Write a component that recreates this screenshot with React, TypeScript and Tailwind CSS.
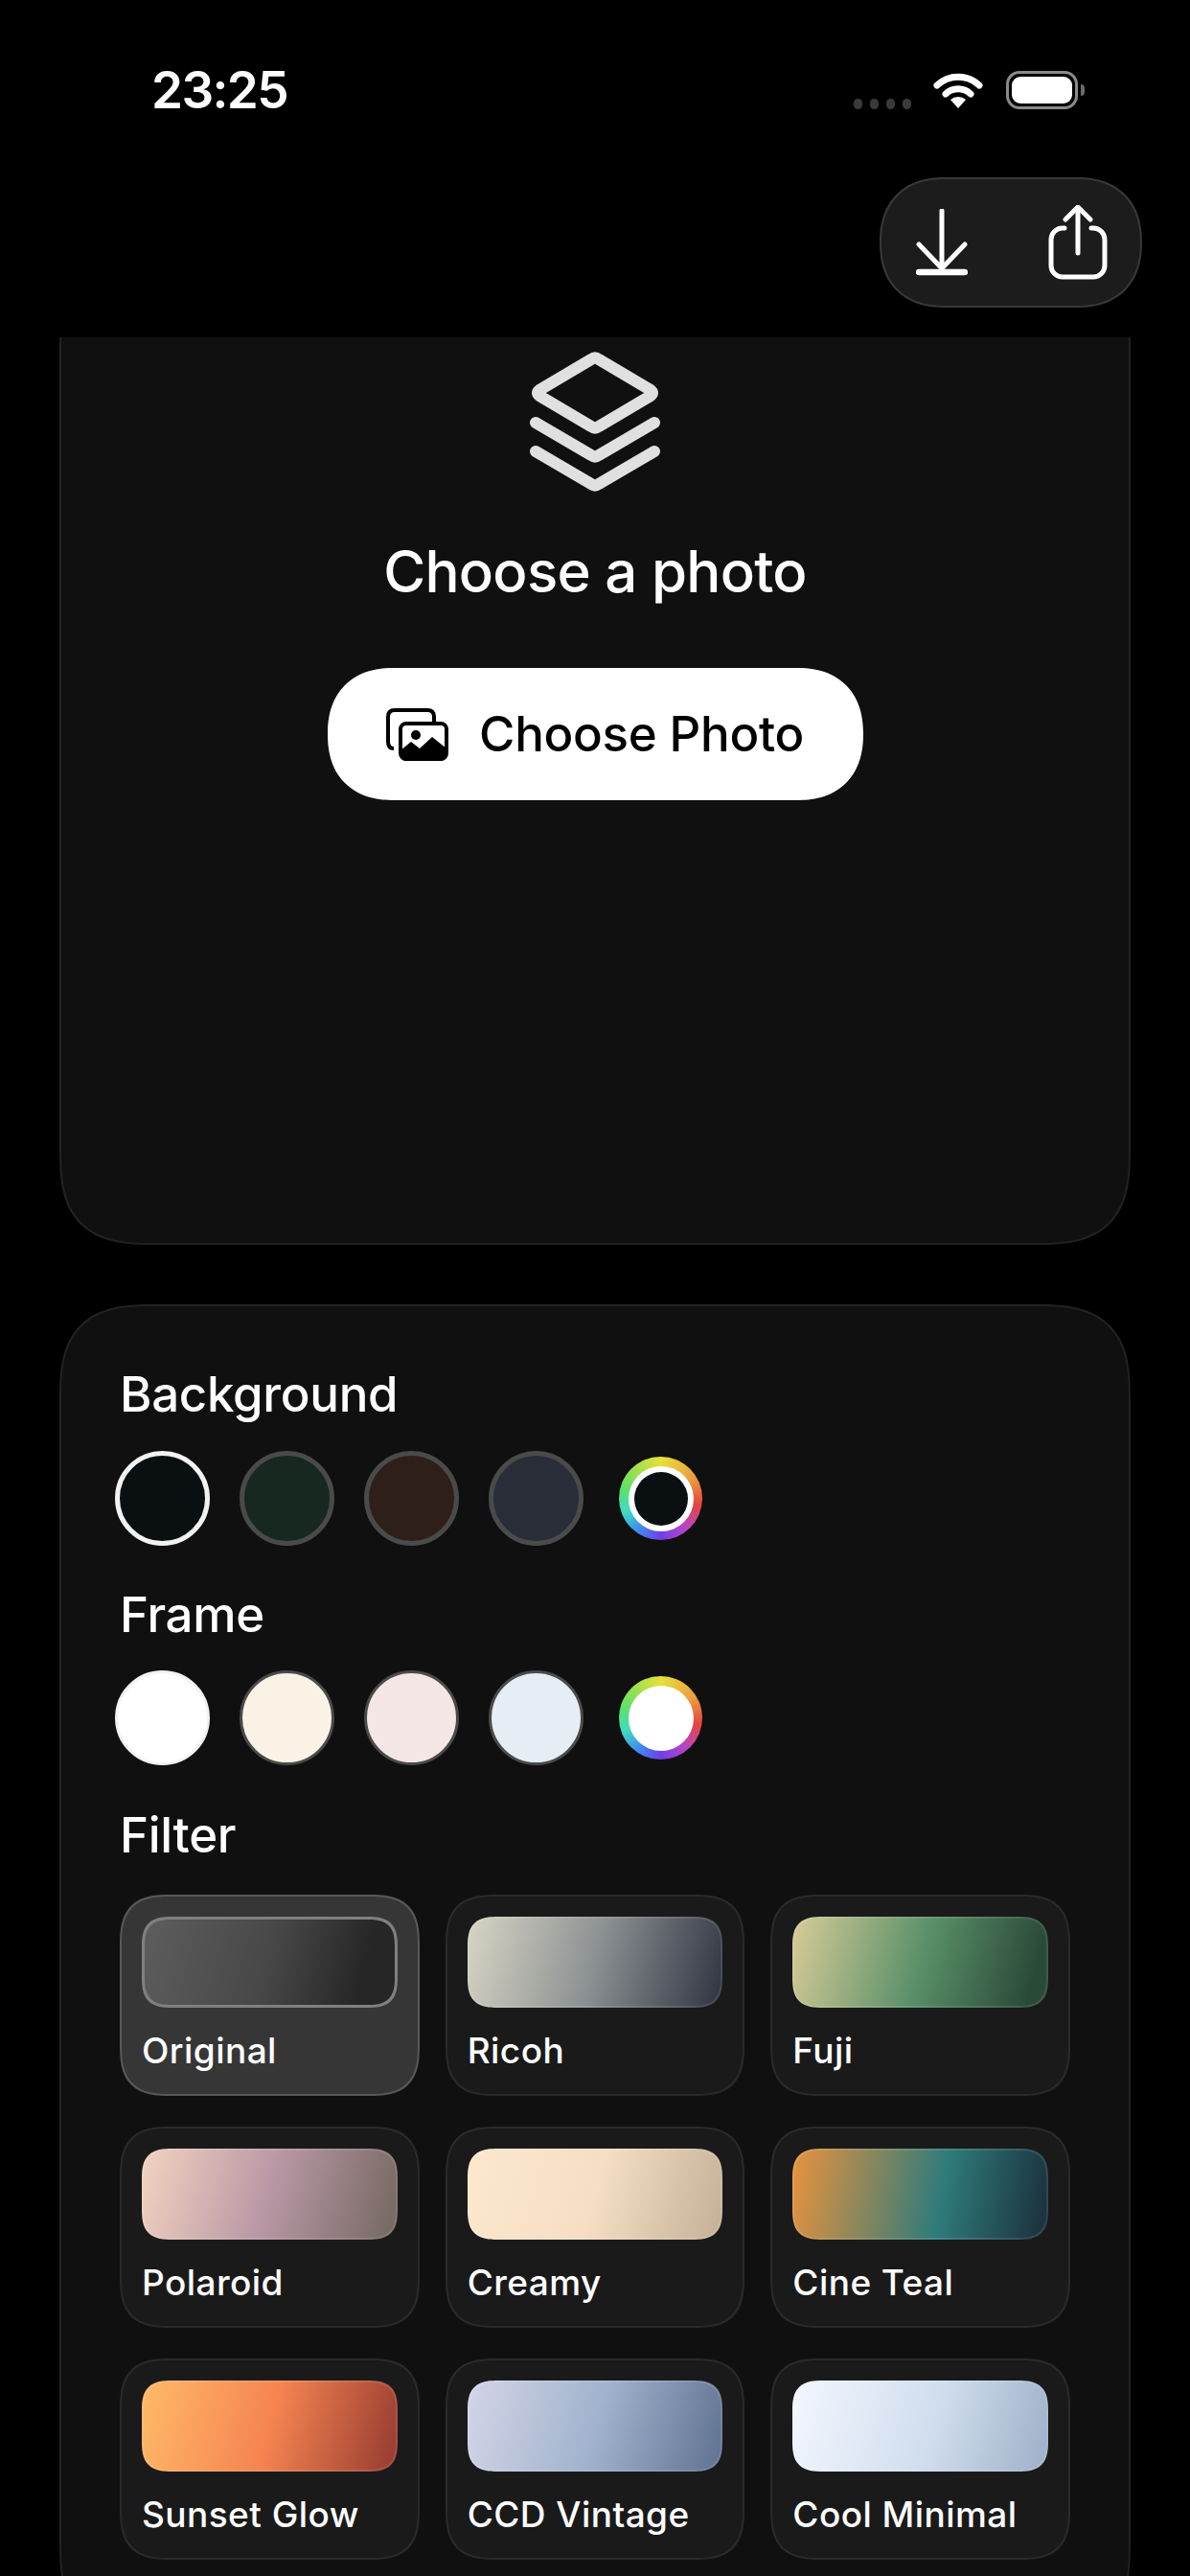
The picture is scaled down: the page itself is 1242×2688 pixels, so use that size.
const backgrounds = ["bg-[#0a0f12]", "bg-[#162820]", "bg-[#2e2018]", "bg-[#282d38]"];
const frames = ["bg-white", "bg-[#faf3e5]", "bg-[#f5e6e6]", "bg-[#e6edf5]"];

const filters = [
  { name: "Original", thumb: "bg-[linear-gradient(105deg,#5e5e5e,#474747_50%,#262626_85%)]", selected: true },
  { name: "Ricoh", thumb: "bg-[linear-gradient(105deg,#d8d5c4,#8b9092_50%,#2e3340)]" },
  { name: "Fuji", thumb: "bg-[linear-gradient(105deg,#d8cc98,#5a9069_50%,#2a4a38_92%)]" },
  { name: "Polaroid", thumb: "bg-[linear-gradient(105deg,#f2d3c0,#b897a5_50%,#73675f)]" },
  { name: "Creamy", thumb: "bg-[linear-gradient(105deg,#fde7cd,#f5dec3_50%,#c3b097)]" },
  { name: "Cine Teal", thumb: "bg-[linear-gradient(100deg,#e8933d,#2f7b7b_58%,#1a2e3a)]" },
  { name: "Sunset Glow", thumb: "bg-[linear-gradient(105deg,#ffba68,#f58451_50%,#943a30)]" },
  { name: "CCD Vintage", thumb: "bg-[linear-gradient(105deg,#d4d5e8,#a1b3cd_50%,#5e7190)]" },
  { name: "Cool Minimal", thumb: "bg-[linear-gradient(105deg,#f3f7ff,#d0dded_55%,#9dafc8)]" },
];

function StatusBar() {
  return (
    <div className="h-[185px] flex items-start justify-between pl-[158px] pr-[110px] pt-[62px]">
      <span className="text-[53px] leading-[64px] font-semibold tracking-[-0.03em] text-white">23:25</span>
      <div className="flex items-start pt-[12px]">
        <div className="flex gap-[8px] pt-[29px] mr-[23px]">
          <span className="w-[9px] h-[11px] rounded-full bg-[#3a3a3a]" />
          <span className="w-[9px] h-[11px] rounded-full bg-[#3a3a3a]" />
          <span className="w-[9px] h-[11px] rounded-full bg-[#3a3a3a]" />
          <span className="w-[9px] h-[11px] rounded-full bg-[#3a3a3a]" />
        </div>
        <svg width="52" height="38" viewBox="0 0 52 38" className="mt-[1px] mr-[24px]">
          <path d="M4 14A32 32 0 0 1 48 14" fill="none" stroke="#fff" strokeWidth="7" strokeLinecap="round" />
          <path d="M13 23A19 19 0 0 1 39 23" fill="none" stroke="#fff" strokeWidth="7" strokeLinecap="round" />
          <path d="M26 38L18 29A12 12 0 0 1 34 29Z" fill="#fff" />
        </svg>
        <div className="flex items-center">
          <div className="w-[75px] h-[40px] rounded-[14px] border-[3px] border-[#8a8a8a] p-[3px]">
            <div className="w-full h-full rounded-[9px] bg-white" />
          </div>
          <span className="ml-[3px] w-[4px] h-[12px] rounded-r-full bg-[#6a6a6a]" />
        </div>
      </div>
    </div>
  );
}

function DownloadIcon() {
  return (
    <svg width="54" height="70" viewBox="0 0 54 70" fill="none" stroke="#fff" strokeLinecap="round" strokeLinejoin="round">
      <path d="M27 2V60" strokeWidth="5" />
      <path d="M3 37L27 62L51 37" strokeWidth="5" />
      <path d="M3 66H51" strokeWidth="6.5" />
    </svg>
  );
}

function ShareIcon() {
  return (
    <svg width="62" height="78" viewBox="0 0 62 78" fill="none" stroke="#fff" strokeWidth="5" strokeLinecap="round" strokeLinejoin="round">
      <path d="M17 24H15A12 12 0 0 0 3 36V63A12 12 0 0 0 15 75H47A12 12 0 0 0 59 63V36A12 12 0 0 0 47 24H45" />
      <path d="M31 50V3" />
      <path d="M18 15L31 2L44 15" />
    </svg>
  );
}

function StackIcon() {
  return (
    <svg width="136" height="147" viewBox="0 0 136 147" fill="none" stroke="#e0e0e0" strokeWidth="12" strokeLinecap="round" strokeLinejoin="round">
      <path d="M64 8Q68 5 72 8L126 40Q130 43 126 46L72 78Q68 81 64 78L10 46Q6 43 10 40Z" />
      <path d="M6 74L64 108Q68 111 72 108L130 74" />
      <path d="M6 104L64 138Q68 141 72 138L130 104" />
    </svg>
  );
}

function PhotosIcon() {
  return (
    <svg width="65" height="55" viewBox="0 0 65 55" fill="none">
      <path d="M8 42Q2 42 2 35V9Q2 2 9 2H43Q50 2 50 9V14" stroke="#000" strokeWidth="4" />
      <rect x="15" y="16" width="48" height="37" rx="6" stroke="#000" strokeWidth="4" fill="#fff" />
      <circle cx="31" cy="28" r="5" fill="#000" />
      <path d="M15 44L26 35L35 42L48 30L63 42V48Q63 55 56 55H21Q15 55 15 48Z" fill="#000" />
    </svg>
  );
}

function ColorWheel({ inner, ring }: { inner: string; ring?: boolean }) {
  return (
    <div className="w-[99px] h-[99px] flex items-center justify-center">
      <div className="w-[87px] h-[87px] rounded-full flex items-center justify-center bg-[conic-gradient(#e6e03c,#eb9a40_60deg,#e6443f_100deg,#b845c8_140deg,#6f3fe6_180deg,#3f8cf0_215deg,#3fdcc0_250deg,#5ee06a_285deg,#a8e04a_325deg,#e6e03c)]">
        <div className="w-[68px] h-[68px] rounded-full bg-white flex items-center justify-center">
          {ring ? <div className={`w-[56px] h-[56px] rounded-full ${inner}`} /> : null}
        </div>
      </div>
    </div>
  );
}

function FilterTile({ name, thumb, selected }: { name: string; thumb: string; selected?: boolean }) {
  return (
    <div
      className={`h-[210px] rounded-[54px] [corner-shape:superellipse(1.5)] border-2 pt-[21px] px-[21px] ${
        selected ? "bg-[#363636] border-[#585858]" : "bg-[#1a1a1a] border-[#2a2a2a]"
      }`}
    >
      <div
        className={`h-[95px] rounded-[32px] [corner-shape:superellipse(1.5)] [background-origin:border-box] ${thumb} ${
          selected ? "border-[3px] border-[#808080]" : "border-2 border-white/10"
        }`}
      />
      <p className="mt-[23px] text-[37px] leading-[44px] font-[550] tracking-[0.012em] text-white">{name}</p>
    </div>
  );
}

export default function App() {
  return (
    <div className="w-[1242px] h-[2688px] bg-black overflow-hidden font-['Inter',sans-serif]">
      <StatusBar />

      <div className="flex justify-end pr-[50px] mb-[31px]">
        <div className="w-[274px] h-[136px] rounded-[68px] [corner-shape:superellipse(1.2)] bg-[#1c1c1c] border-2 border-[#383838] flex items-center justify-between pl-[36px] pr-[34px]">
          <DownloadIcon />
          <ShareIcon />
        </div>
      </div>

      <div className="px-[62px]">
        <section className="h-[947px] rounded-b-[100px] [corner-shape:superellipse(1.5)] bg-[#101010] border-2 border-t-0 border-[#222] flex flex-col items-center pt-[15px]">
          <StackIcon />
          <h2 className="mt-[46px] text-[60px] leading-[72px] font-[550] tracking-[-0.012em] text-white">Choose a photo</h2>
          <button className="mt-[65px] w-[559px] h-[138px] rounded-[69px] [corner-shape:superellipse(1.2)] bg-white flex items-center justify-center gap-[32px]">
            <PhotosIcon />
            <span className="text-[51px] leading-[60px] font-[550] tracking-[-0.006em] text-black">Choose Photo</span>
          </button>
        </section>

        <section className="mt-[62px] rounded-[100px] [corner-shape:superellipse(1.5)] bg-[#101010] border-2 border-[#222] px-[61px] pt-[62px] pb-[80px]">
          <h3 className="text-[51px] leading-[60px] font-[550] tracking-[-0.006em] text-white">Background</h3>
          <div className="mt-[29px] flex gap-[31px] -ml-[5px]">
            <div className={`w-[99px] h-[99px] rounded-full border-[5px] border-[#f2f2f2] ${backgrounds[0]}`} />
            {backgrounds.slice(1).map((c) => (
              <div key={c} className={`w-[99px] h-[99px] rounded-full border-[5px] border-[#4a4a4a] ${c}`} />
            ))}
            <ColorWheel inner={backgrounds[0]} ring />
          </div>

          <h3 className="mt-[42px] text-[51px] leading-[60px] font-[550] tracking-[-0.006em] text-white">Frame</h3>
          <div className="mt-[28px] flex gap-[31px] -ml-[5px]">
            <div className="w-[99px] h-[99px] rounded-full border-[3px] border-[#f2f2f2] bg-white" />
            {frames.slice(1).map((c) => (
              <div key={c} className={`w-[99px] h-[99px] rounded-full border-[3px] border-[#4a4a4a] ${c}`} />
            ))}
            <ColorWheel inner="bg-white" />
          </div>

          <h3 className="mt-[43px] text-[51px] leading-[60px] font-[550] tracking-[-0.006em] text-white">Filter</h3>
          <div className="mt-[32px] grid grid-cols-3 gap-x-[27px] gap-y-[32px]">
            {filters.map((f) => (
              <FilterTile key={f.name} {...f} />
            ))}
          </div>
        </section>
      </div>
    </div>
  );
}
